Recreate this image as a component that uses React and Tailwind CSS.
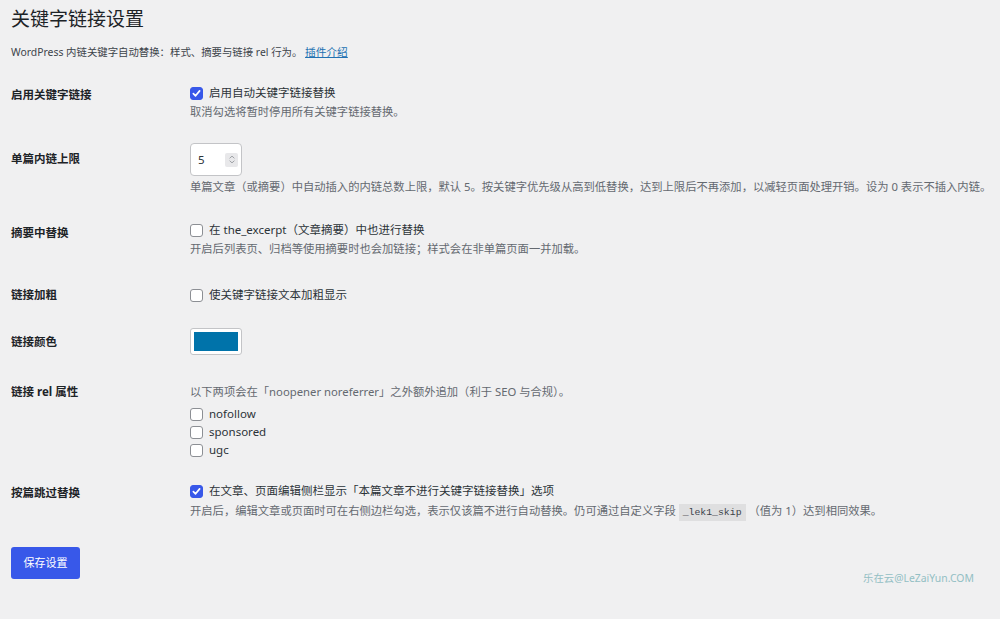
import React, { useState } from 'react'

const Checkbox = ({ checked, onChange }) => (
    <span
        onClick={onChange}
        className={
            checked
                ? 'inline-flex items-center justify-center w-[13px] h-[13px] shrink-0 rounded-[3px] bg-[#3858e9] border border-[#3858e9] cursor-pointer'
                : 'inline-flex items-center justify-center w-[13px] h-[13px] shrink-0 rounded-[3px] bg-white border border-[#8c8f94] cursor-pointer'
        }
    >
        {checked && (
            <svg viewBox="0 0 13 13" className="w-[11px] h-[11px]">
                <path d="M2.8 6.6 L5.4 9.2 L10.2 3.4" fill="none" stroke="white" strokeWidth="2" strokeLinecap="round" strokeLinejoin="round" />
            </svg>
        )}
    </span>
)

const CheckLine = ({ checked, onChange, children }) => (
    <label className="flex items-center h-[18px] leading-[18px] text-[11.5px] text-[#2c3338]">
        <Checkbox checked={checked} onChange={onChange} />
        <span className="ml-[6px] whitespace-nowrap">{children}</span>
    </label>
)

const Desc = ({ className = '', children }) => (
    <p className={'leading-[18px] text-[11.3px] text-[#646970] whitespace-nowrap ' + className}>{children}</p>
)

const Row = ({ label, labelPad, className = '', children }) => (
    <div className={'flex ' + className}>
        <div className={'w-[179px] shrink-0 leading-[18px] text-[11.5px] font-bold text-[#1d2327] ' + labelPad}>
            {label}
        </div>
        <div className="flex-1 min-w-0">{children}</div>
    </div>
)

const App = () => {
    const [opts, setOpts] = useState({
        enabled: true,
        excerpt: false,
        bold: false,
        nofollow: false,
        sponsored: false,
        ugc: false,
        skip: true,
    })
    const toggle = (key) => () => setOpts(prev => ({ ...prev, [key]: !prev[key] }))

    return (
        <div className="relative min-h-screen bg-[#f0f0f1] font-['Noto_Sans','Noto_Sans_CJK_SC',sans-serif] overflow-hidden">
            <div className="px-[11px]">
                <h1 className="pt-[6px] leading-[26px] text-[19px] font-normal text-[#1d2327]">关键字链接设置</h1>
                <p className="mt-[12px] leading-[16px] text-[10.4px] text-[#3c434a]">
                    WordPress 内链关键字自动替换：样式、摘要与链接 rel 行为。{' '}
                    <a href="#" className="text-[10.7px] text-[#2271b1] underline">插件介绍</a>
                </p>

                <Row label="启用关键字链接" labelPad="pt-[2px]" className="mt-[24px]">
                    <CheckLine checked={opts.enabled} onChange={toggle('enabled')}>启用自动关键字链接替换</CheckLine>
                    <Desc className="mt-[1px]">取消勾选将暂时停用所有关键字链接替换。</Desc>
                </Row>

                <Row label="单篇内链上限" labelPad="pt-[7px]" className="mt-[22px]">
                    <div className="flex items-center justify-between w-[52px] h-[33px] pl-[7px] pr-[3px] bg-white border border-[#c3c4c7] rounded-[4px]">
                        <span className="text-[11.5px] text-[#2c3338]">5</span>
                        <span className="flex flex-col items-center justify-center w-[13px] h-[14px] bg-[#e8e8ea] rounded-[2px]">
                            <svg viewBox="0 0 10 12" className="w-[8px] h-[11px]">
                                <path d="M2 4.5 L5 1.8 L8 4.5 M2 7.5 L5 10.2 L8 7.5" fill="none" stroke="#8c8f94" strokeWidth="1" />
                            </svg>
                        </span>
                    </div>
                    <Desc className="mt-[2px]">单篇文章（或摘要）中自动插入的内链总数上限，默认 5。按关键字优先级从高到低替换，达到上限后不再添加，以减轻页面处理开销。设为 0 表示不插入内链。</Desc>
                </Row>

                <Row label="摘要中替换" labelPad="pt-[3px]" className="mt-[25px]">
                    <CheckLine checked={opts.excerpt} onChange={toggle('excerpt')}>在 the_excerpt（文章摘要）中也进行替换</CheckLine>
                    <Desc className="mt-[1px]">开启后列表页、归档等使用摘要时也会加链接；样式会在非单篇页面一并加载。</Desc>
                </Row>

                <Row label="链接加粗" labelPad="pt-0" className="mt-[28px]">
                    <CheckLine checked={opts.bold} onChange={toggle('bold')}>使关键字链接文本加粗显示</CheckLine>
                </Row>

                <Row label="链接颜色" labelPad="pt-[5px]" className="mt-[24px]">
                    <div className="w-[52px] h-[27px] p-[3px] bg-white border border-[#c3c4c7] rounded-[3px]">
                        <div className="w-full h-full bg-[#0073aa]"></div>
                    </div>
                </Row>

                <Row label="链接 rel 属性" labelPad="pt-0" className="mt-[28px]">
                    <Desc>以下两项会在「noopener noreferrer」之外额外追加（利于 SEO 与合规）。</Desc>
                    <div className="mt-[4px] flex flex-col">
                        <CheckLine checked={opts.nofollow} onChange={toggle('nofollow')}>nofollow</CheckLine>
                        <CheckLine checked={opts.sponsored} onChange={toggle('sponsored')}>sponsored</CheckLine>
                        <CheckLine checked={opts.ugc} onChange={toggle('ugc')}>ugc</CheckLine>
                    </div>
                </Row>

                <Row label="按篇跳过替换" labelPad="pt-[2px]" className="mt-[23px]">
                    <CheckLine checked={opts.skip} onChange={toggle('skip')}>在文章、页面编辑侧栏显示「本篇文章不进行关键字链接替换」选项</CheckLine>
                    <p className="mt-[1px] leading-[19px] text-[11.3px] text-[#646970] whitespace-nowrap">
                        开启后，编辑文章或页面时可在右侧边栏勾选，表示仅该篇不进行自动替换。仍可通过自定义字段{' '}
                        <code className="px-[4px] py-[3px] bg-[#dfdfe0] text-[#3c434a] text-[9.8px] font-['Liberation_Mono',monospace]">_lek1_skip</code>
                        {' '}（值为 1）达到相同效果。
                    </p>
                </Row>

                <button
                    type="button"
                    className="mt-[25px] w-[69px] h-[32px] rounded-[3px] bg-[#3858e9] text-white text-[11px] hover:bg-[#2145e6]"
                >
                    保存设置
                </button>
            </div>

            <div className="absolute left-[863px] top-[570px] leading-[16px] text-[10.4px] text-[#93bfc4]">乐在云@LeZaiYun.COM</div>
        </div>
    )
}

export default App
